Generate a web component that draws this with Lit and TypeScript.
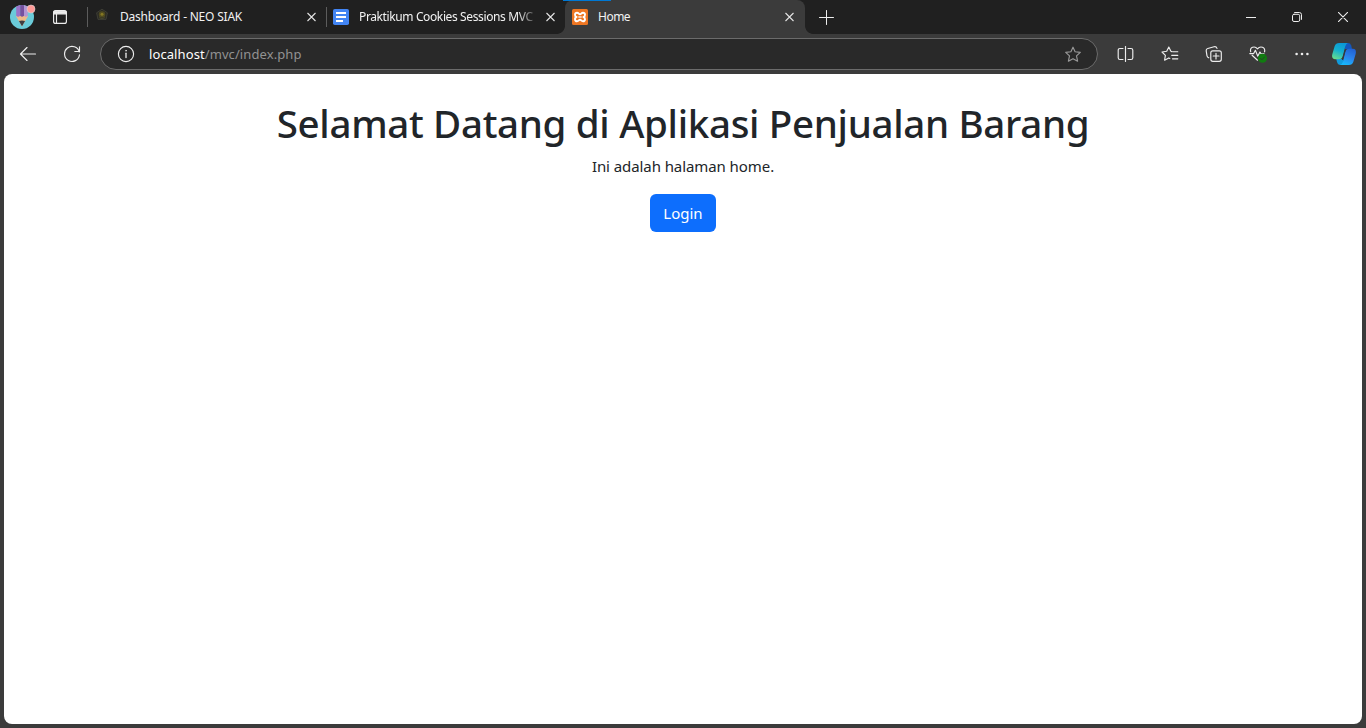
import { LitElement, html, css, svg } from "lit";
import { customElement, property } from "lit/decorators.js";

const closeGlyph = html`<svg class="x" width="9" height="10" viewBox="0 0 9 10"><path d="M.5 1 8.5 9M8.5 1 .5 9" stroke="#e4e4e4" stroke-width="1.1" fill="none" /></svg>`;

const crest = html`<svg width="16" height="16" viewBox="0 0 16 16">
  <path d="M8 .2 13.4 3.8 12 10.4H4L2.6 3.8Z" fill="#2b2b24" stroke="#44443a" stroke-width=".8" />
  <circle cx="8" cy="5.4" r="3.2" fill="#4f4a20" /><circle cx="8" cy="5.2" r="1.5" fill="#857823" />
  <path d="M5 8.6Q8 11 11 8.6" stroke="#47472f" fill="none" />
</svg>`;

const docs = html`<svg width="16" height="16" viewBox="0 0 16 16">
  <rect width="16" height="16" rx="1.8" fill="#4285f4" />
  <path d="M3 4H13M3 8H13M3 12H10" stroke="#fff" stroke-width="2" />
</svg>`;

const xampp = html`<svg width="16" height="16" viewBox="0 0 16 16">
  <rect width="16" height="16" rx="1.5" fill="#ee7622" />
  <path d="M4.6 8C2.3 7.4 2.5 3.7 5 3.7 6.8 3.7 6.7 5.2 8 5.2S9.2 3.7 11 3.7C13.5 3.7 13.7 7.4 11.4 8 13.7 8.6 13.5 12.3 11 12.3 9.2 12.3 9.3 10.8 8 10.8S6.8 12.3 5 12.3C2.5 12.3 2.3 8.6 4.6 8Z" fill="none" stroke="#fff" stroke-width="1.9" stroke-linejoin="round" />
  <path d="M6.3 8H9.7" stroke="#fff" stroke-width="1.3" />
</svg>`;

@customElement("browser-tab")
class BrowserTab extends LitElement {
  @property() label = "";
  @property({ attribute: false }) icon: unknown;
  static styles = css`
    :host { display: flex; align-items: center; height: 34px; box-sizing: border-box; padding: 0 10px 0 6px; color: #f2f2f2; }
    .icon { display: flex; flex: none; margin-right: 10px; }
    .label { flex: 1; min-width: 0; white-space: nowrap; font: 12px/18px "Noto Sans", "Open Sans", sans-serif; letter-spacing: var(--track, 0); margin-right: 7px; }
    :host([faded]) .label { mask-image: linear-gradient(90deg, #000 calc(100% - 22px), transparent); -webkit-mask-image: linear-gradient(90deg, #000 calc(100% - 22px), transparent); }
    .x { flex: none; display: block; }
  `;
  render() {
    return html`<span class="icon">${this.icon}</span><span class="label">${this.label}</span>${closeGlyph}`;
  }
}

const icon = (w: number, h: number, body: unknown) =>
  html`<svg width=${w} height=${h} viewBox="0 0 ${w} ${h}" fill="none" stroke="#ededed" stroke-width="1.15" stroke-linecap="round" stroke-linejoin="round">${body}</svg>`;

@customElement("app-root")
class AppRoot extends LitElement {
  static styles = css`
    :host { display: flex; flex-direction: column; width: 100%; height: 728px; box-sizing: border-box; overflow: hidden; background: #3b3b3b; font-family: "Noto Sans", "Open Sans", sans-serif; }
    svg { display: block; flex: none; }
    .strip { display: flex; flex: none; height: 34px; background: #202020; align-items: center; }
    .cell { display: flex; align-items: center; justify-content: center; flex: none; }
    .profile { width: 44px; height: 34px; }
    .work { width: 32px; margin-right: 11px; }
    .sep { width: 1px; height: 20px; background: #5c5c5c; flex: none; }
    .t1 { width: 238px; --track: -0.21px; }
    .t2 { width: 238px; --track: -0.38px; }
    .t3 { position: relative; width: 240px; --track: -0.5px; padding-left: 7px; padding-right: 11px; background: #3b3b3b; border-radius: 8px 8px 0 0; }
    .t3::before { content: ""; position: absolute; top: 0; left: -2px; width: 48px; height: 1px; background: #0078d4; }
    .curve { width: 8px; height: 8px; flex: none; align-self: flex-end; }
    .left { margin-left: -8px; background: radial-gradient(circle at 0 0, #202020 7.5px, #3b3b3b 8.2px); }
    .right { background: radial-gradient(circle at 100% 0, #202020 7.5px, #3b3b3b 8.2px); }
    .plus { width: 27px; }
    .win { margin-left: auto; display: flex; }
    .win .cell { width: 46px; height: 34px; }
    .bar { display: flex; flex: none; height: 40px; align-items: center; background: #3b3b3b; }
    .nav { width: 44px; }
    .back { margin-left: 6px; }
    .address { width: 998px; height: 32px; box-sizing: border-box; border: 1px solid #6b6b6b; border-radius: 16px; background: #292929; margin-left: 6px; margin-right: 6px; padding: 0 15px 0 16px; display: flex; align-items: center; }
    .url { flex: 1; margin-left: 14px; font-size: 13px; line-height: 18px; color: #929292; letter-spacing: 0.09px; }
    .host { color: #fff; }
    .tool { width: 44px; }
    .split { width: 43px; margin-right: 1px; }
    .pilot { width: 40px; }
    .page { flex: 1; margin: 0 4px 4px; border-radius: 8px; background: #fff; color: #212529; text-align: center; padding-top: 25px; }
    h1 { margin: 0 0 7px; font-size: 38.5px; line-height: 48px; font-weight: 500; white-space: nowrap; letter-spacing: -0.32px; }
    p { margin: 0 0 16px; font-size: 15px; line-height: 24px; letter-spacing: -0.08px; }
    .login { display: inline-flex; align-items: center; justify-content: center; width: 66px; height: 38px; padding: 0; border: 0; border-radius: 6px; background: #0d6efd; color: #fff; font-family: inherit; font-size: 15px; line-height: 24px; vertical-align: top; }
  `;

  render() {
    return html`
      <div class="strip">
        <div class="cell profile">
          <svg width="28" height="28" viewBox="0 0 28 28">
            <defs><clipPath id="c"><circle cx="14" cy="14" r="12" /></clipPath></defs>
            <g clip-path="url(#c)">
              <path d="M0 0H28V28H0Z" fill="#6bcbd9" />
              <path d="M8.2 12.5H19.8V13.6L14 23.5 8.2 13.6Z" fill="#edba89" />
              <path d="M8.2 0H12.2V12.6Q10.2 15 8.2 12.8Z" fill="#9a72c7" /><path d="M12.2 0H16V12.6Q14 15 12.2 12.6Z" fill="#75519f" /><path d="M16 0H19.8V12.8Q18 15 16 12.6Z" fill="#b296d4" />
              <path d="M10.9 18Q14 16.8 17.1 18L14 23.3Z" fill="#3d3d42" />
            </g>
            <circle cx="23" cy="6" r="4" fill="#ff9b98" stroke="#d9d3d5" stroke-width=".6" />
          </svg>
        </div>
        <div class="cell work">${icon(16, 16, svg`<rect x="1.6" y="1.6" width="12.8" height="12.8" rx="2" /><path d="M2 2.2H14V4.8H2Z" fill="#ededed" /><path d="M4.5 5V14" />`)}</div>
        <div class="sep"></div>
        <browser-tab class="t1" label="Dashboard - NEO SIAK" .icon=${crest}></browser-tab>
        <div class="sep"></div>
        <browser-tab class="t2" faded label="Praktikum Cookies Sessions MVC" .icon=${docs}></browser-tab>
        <div class="curve left"></div>
        <browser-tab class="t3" label="Home" .icon=${xampp}></browser-tab>
        <div class="curve right"></div>
        <div class="cell plus">${icon(15, 15, svg`<path d="M.5 7.5H14.5M7.5 .5V14.5" stroke-width="1" />`)}</div>
        <div class="win">
          <div class="cell">${icon(10, 11, svg`<path d="M0 5.5H10" stroke-width="1" stroke-linecap="butt" />`)}</div>
          <div class="cell">${icon(10, 10, svg`<rect x=".5" y="2.3" width="7.2" height="7.2" rx="1.5" stroke-width="1" /><path d="M2.6 .5H7.3Q9.5 .5 9.5 2.7V7.4" stroke-width="1" />`)}</div>
          <div class="cell">${icon(10, 10, svg`<path d="M.4 .4 9.6 9.6M9.6 .4 .4 9.6" stroke-width="1.1" />`)}</div>
        </div>
      </div>

      <div class="bar">
        <div class="cell nav back">${icon(18, 16, svg`<path d="M16.5 8H1.7M8 1.5 1.5 8 8 14.5" />`)}</div>
        <div class="cell nav">${icon(18, 18, svg`<path d="M16.3 7A7.5 7.5 0 1 0 16.5 9.8M16.5 1.8V6.5H11.8" />`)}</div>
        <div class="address">
          ${icon(18, 18, svg`<circle cx="9" cy="9" r="7.6" /><path d="M9 8.2V12.5" stroke-width="1.3" /><circle cx="9" cy="5.7" r=".5" fill="#ededed" stroke-width=".5" />`)}
          <span class="url"><span class="host">localhost</span>/mvc/index.php</span>
          ${icon(18, 17, svg`<path d="M9 1.2 11.1 5.8 16.3 6.4 12.5 9.9 13.6 15.2 9 12.7 4.4 15.2 5.5 9.9 1.7 6.4 6.9 5.8Z" stroke="#999" />`)}
        </div>
        <div class="cell split">${icon(17, 16, svg`<path d="M6 2.5H3Q1.2 2.5 1.2 4.3V11.7Q1.2 13.5 3 13.5H6M11 2.5H14Q15.8 2.5 15.8 4.3V11.7Q15.8 13.5 14 13.5H11" /><path d="M8.5 .5V15.5" />`)}</div>
        <div class="cell tool">${icon(18, 16, svg`<path d="M10.8 5.6 9.9 5.3 7.8 1 5.7 5.3 1 6 4.4 9.3 3.6 14.2 7.8 11.9 8.8 12.4M11.8 5.7H16.8M10.7 9.3H16.8M11.5 12.8H16.8" />`)}</div>
        <div class="cell tool">${icon(18, 18, svg`<rect x="5.8" y="5.8" width="10.5" height="10.5" rx="2" /><path d="M11 8.2V14M8.2 11H14M3.8 12.8Q2.4 12.2 2 10.8L1.2 5.8Q1 4 2.8 3.5L9 1.8Q11.3 1.3 12 3.4" />`)}</div>
        <div class="cell tool">
          ${icon(18, 18, svg`<path d="M1.7 6.8C.4 2 5.8.5 8.5 3.8 11.2.5 16.6 2 15.6 6.8M3.1 10.3 8.5 15.2M.8 8.6H4.7L6.4 5.3 8.8 11.2 10.9 7 12 8.8H15" /><circle cx="13.5" cy="13.3" r="4.5" fill="#107c10" stroke="none" /><path d="M11.5 13.4 12.9 14.8 15.6 12" stroke="#2b402b" stroke-width="1" />`)}
        </div>
        <div class="cell tool">${icon(14, 14, svg`<g fill="#ededed" stroke="none"><circle cx="1.6" cy="7" r="1.3" /><circle cx="7" cy="7" r="1.3" /><circle cx="12.4" cy="7" r="1.3" /></g>`)}</div>
        <div class="cell pilot">
          <svg width="24" height="24" viewBox="0 0 24 24">
            <defs>
              <linearGradient id="g1" x1=".7" y1="0" x2=".3" y2="1"><stop stop-color="#0a96d6" /><stop offset=".5" stop-color="#14b0cf" /><stop offset="1" stop-color="#63dc90" /></linearGradient>
              <linearGradient id="g2" x1=".7" y1="0" x2=".3" y2="1"><stop stop-color="#2162d4" /><stop offset=".5" stop-color="#2b83ec" /><stop offset="1" stop-color="#16b9fb" /></linearGradient>
            </defs>
            <path d="M12 1H16Q18.5 1 19.2 3.4L20 7H13Z" fill="#1457bd" />
            <path d="M12 23H8.5Q5.8 23 5 20L4.3 17H11Z" fill="#109bdc" />
            <path d="M7.2 1H15.8Q14 1.5 13.2 4.6L10.8 14Q10 17.2 7 17.2H3.2Q-.8 17.2 .3 12.2L2.7 4Q3.7 1 7.2 1Z" fill="url(#g1)" />
            <path d="M16.8 23H8.2Q10.2 22.3 11 19.4L13.3 10Q14.2 6.8 17 6.8H20.8Q24.7 6.8 23.7 11.8L21.3 20Q20.3 23 16.8 23Z" fill="url(#g2)" />
            <path d="M13.3 8 10.3 18" stroke="#303840" stroke-width="1" />
          </svg>
        </div>
      </div>

      <main class="page">
        <h1>Selamat Datang di Aplikasi Penjualan Barang</h1>
        <p>Ini adalah halaman home.</p>
        <button class="login">Login</button>
      </main>
    `;
  }
}
